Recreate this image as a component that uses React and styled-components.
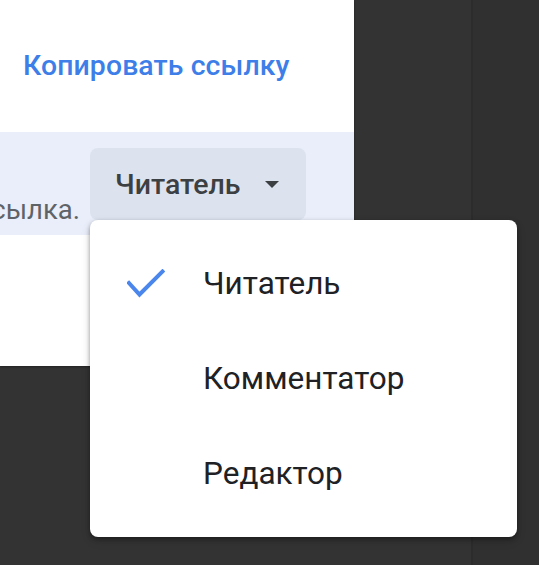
import React from "react";
import styled, { createGlobalStyle } from "styled-components";

const Global = createGlobalStyle`
  html, body { margin: 0; padding: 0; }
  body {
    background: #323232;
    font-family: Roboto, "Noto Sans", Arial, sans-serif;
  }
`;

const Screen = styled.div`
  width: 539px;
  height: 565px;
  overflow: hidden;
  background: linear-gradient(
    to right,
    #333333 0 471px,
    #2c2c2c 471px 473px,
    #303030 473px
  );
`;

const Dialog = styled.div`
  width: 354px;
  height: 366px;
  background: #ffffff;
  display: flex;
  flex-direction: column;
  box-shadow: 0 1px 2px rgba(0, 0, 0, 0.35);
`;

const LinkRow = styled.div`
  height: 132px;
  box-sizing: border-box;
  display: flex;
  align-items: center;
  padding: 0 0 2px 23px;
`;

const CopyLink = styled.a`
  color: #3d7ee8;
  font-size: 28.4px;
  font-weight: 500;
  letter-spacing: 0.1px;
  text-decoration: none;
  cursor: pointer;
`;

const AccessBand = styled.div`
  height: 103px;
  box-sizing: border-box;
  background: #e9eefa;
  display: flex;
  align-items: flex-start;
  gap: 10px;
  padding: 16px 48px 0 0;
`;

/* the long access note is cut at the dialog's left edge; only its tail shows */
const NoteClip = styled.div`
  flex: 1;
  min-width: 0;
  overflow: hidden;
  display: flex;
  justify-content: flex-end;
  align-self: stretch;
  align-items: flex-end;
  padding-bottom: 7px;
`;

const AccessNote = styled.span`
  white-space: nowrap;
  font-size: 27.5px;
  line-height: 36px;
  color: #5f6368;
`;

const RoleSelect = styled.div`
  position: relative;
  flex: none;
`;

const RoleButton = styled.button`
  width: 216px;
  height: 72px;
  box-sizing: border-box;
  border: none;
  border-radius: 8px;
  background: #dce3ee;
  display: flex;
  align-items: center;
  justify-content: space-between;
  padding: 0 27px 0 25px;
  font-family: inherit;
  font-size: 28.5px;
  font-weight: 500;
  color: #3c4043;
  cursor: pointer;
`;

const Menu = styled.ul`
  position: absolute;
  top: 72px;
  left: 0;
  z-index: 2;
  width: 427px;
  box-sizing: border-box;
  margin: 0;
  padding: 16px 0;
  list-style: none;
  background: #ffffff;
  border-radius: 8px;
  box-shadow: 0 2px 4px rgba(0, 0, 0, 0.35), 0 4px 10px rgba(0, 0, 0, 0.15);
`;

const MenuItem = styled.li`
  height: 95px;
  display: flex;
  align-items: center;
  font-size: 31.5px;
  color: #202124;
  cursor: pointer;
`;

const CheckSlot = styled.span`
  width: 113px;
  flex: none;
  display: flex;
  align-items: center;
  padding-left: 37px;
  box-sizing: border-box;
`;

const Caret = () => (
  <svg width="14" height="7" viewBox="0 0 14 7">
    <path d="M0 0 H14 L7 7 Z" fill="#3c4043" />
  </svg>
);

const Check = () => (
  <svg width="38" height="29" viewBox="0 0 38 29">
    <path
      d="M2 14 L12.5 25.5 L35.5 2.5"
      fill="none"
      stroke="#4a86ec"
      strokeWidth="4"
      strokeLinecap="square"
    />
  </svg>
);

const roles = [
  { id: "reader", label: "Читатель" },
  { id: "commenter", label: "Комментатор" },
  { id: "editor", label: "Редактор" },
];

export default function App() {
  const selected = "reader";
  return (
    <>
      <Global />
      <Screen>
        <Dialog>
          <LinkRow>
            <CopyLink>Копировать ссылку</CopyLink>
          </LinkRow>
          <AccessBand>
            <NoteClip>
              <AccessNote>
                Просматривать может любой пользователь, у которого есть ссылка.
              </AccessNote>
            </NoteClip>
            <RoleSelect>
              <RoleButton>
                Читатель
                <Caret />
              </RoleButton>
              <Menu>
                {roles.map((r) => (
                  <MenuItem key={r.id}>
                    <CheckSlot>{r.id === selected && <Check />}</CheckSlot>
                    {r.label}
                  </MenuItem>
                ))}
              </Menu>
            </RoleSelect>
          </AccessBand>
        </Dialog>
      </Screen>
    </>
  );
}
